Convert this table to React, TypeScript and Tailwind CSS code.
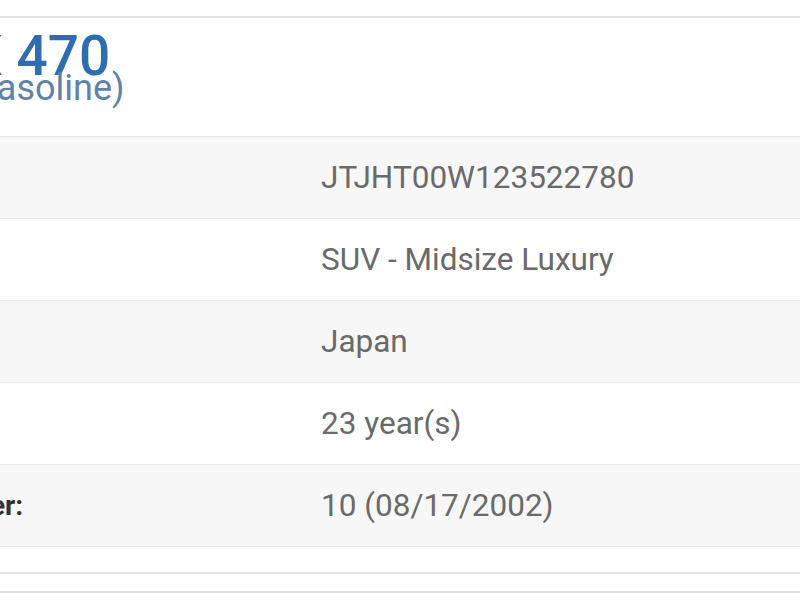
const rows = [
  { label: 'VIN:', value: 'JTJHT00W123522780', shaded: true },
  { label: 'Class:', value: 'SUV - Midsize Luxury', shaded: false },
  { label: 'Made In:', value: 'Japan', shaded: true },
  { label: 'Age:', value: '23 year(s)', shaded: false },
  { label: 'Records Number:', value: '10 (08/17/2002)', shaded: true },
]

export default function App() {
  return (
    <div className="w-[800px] h-[600px] overflow-hidden bg-white font-['Roboto',sans-serif]">
      <div className="pt-4">
        <div className="border-t-2 border-[#e2e2e2]">
          <div className="pt-[18px] pb-[35px] whitespace-nowrap">
            <h1 className="-ml-[221px] text-[55px] leading-[40px] font-medium text-[#2f6db2]">
              Lexus LX 470
            </h1>
            <p className="-ml-[40px] text-[36px] leading-[25px] text-[#5f82a8]">
              (Gasoline)
            </p>
          </div>

          <div className="-ml-[216px] w-[1016px] border-t border-[#e6e6e6]">
            {rows.map((r) => (
              <div
                key={r.label}
                className={`grid grid-cols-[517px_1fr] items-center h-[82px] border-b border-[#e8e8e8] text-[31.5px] whitespace-nowrap ${r.shaded ? 'bg-[#f7f7f7]' : 'bg-white'}`}
              >
                <div className="pl-5 font-bold text-[28px] text-[#333]">{r.label}</div>
                <div className="pl-5 text-[#6a6a6a]">{r.value}</div>
              </div>
            ))}
          </div>

          <div className="h-[25px]" />
          <div className="border-t-2 border-[#e2e2e2] h-[19px]" />
          <div className="border-t-2 border-[#e2e2e2]" />
        </div>
      </div>
    </div>
  )
}
